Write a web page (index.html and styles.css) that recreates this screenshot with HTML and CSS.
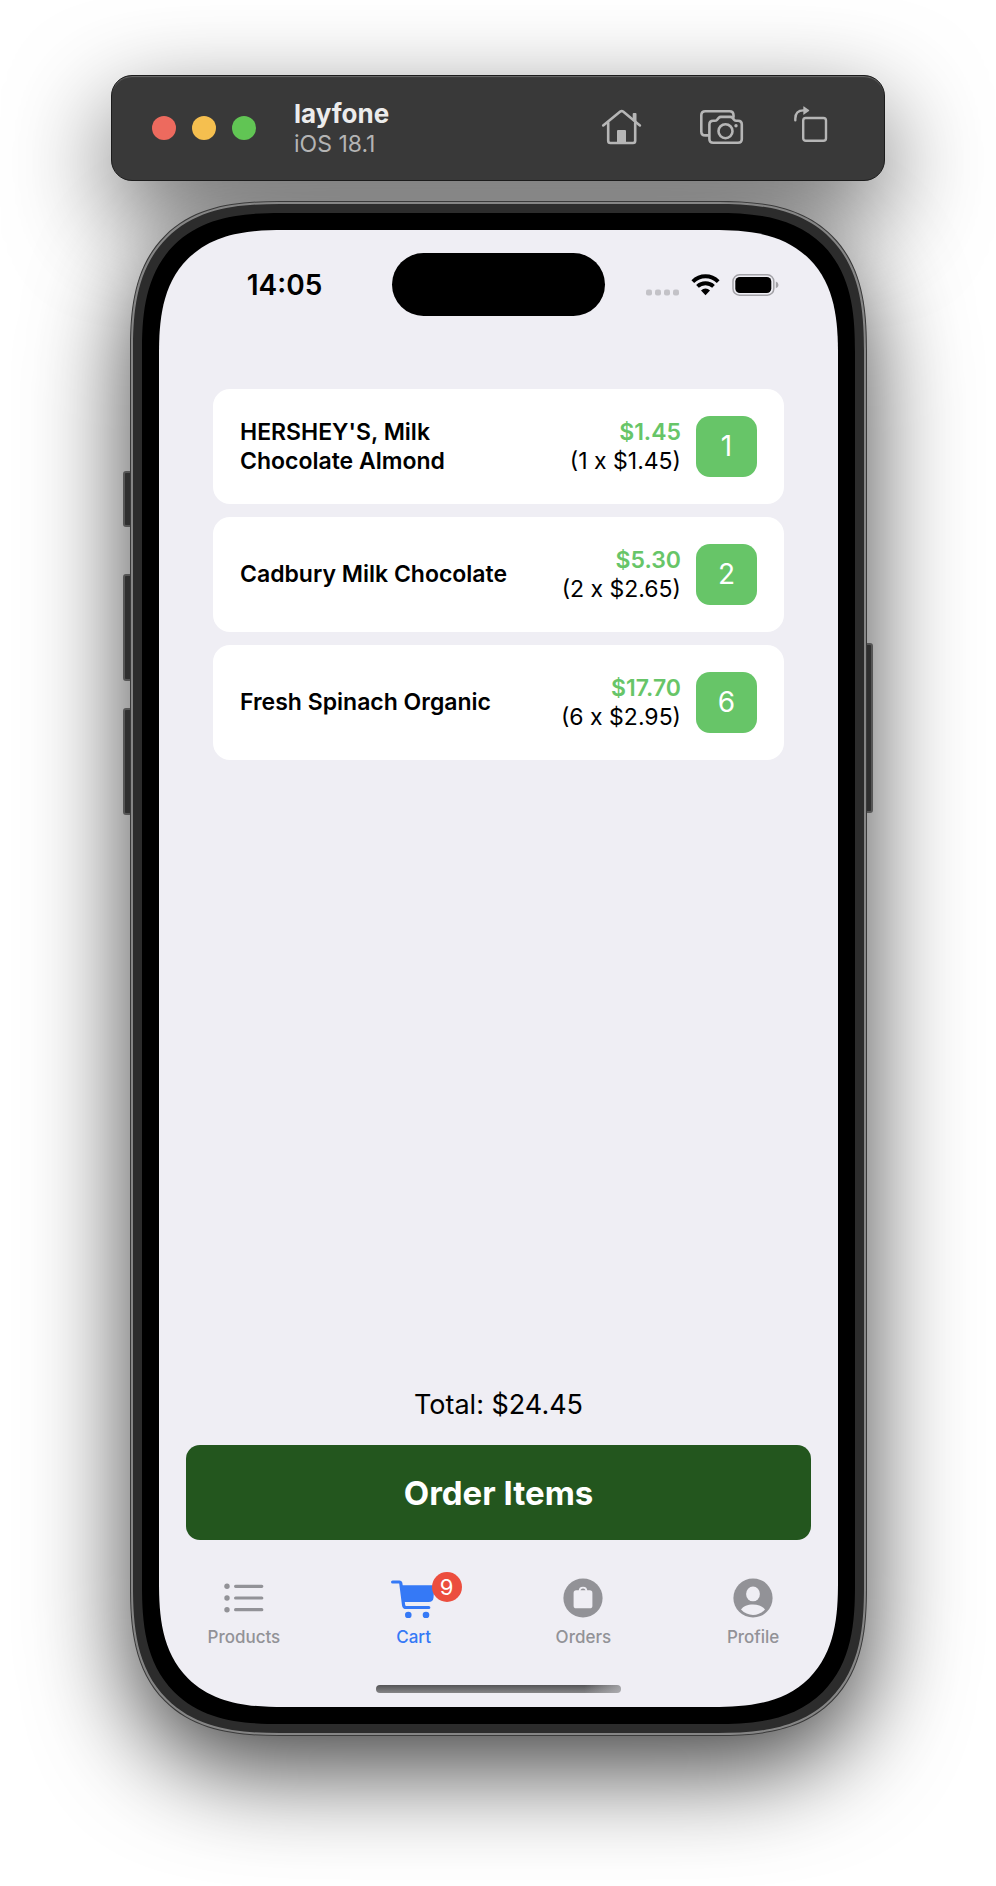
FILE: index.html
```html
<!DOCTYPE html>
<html lang="en">
<head>
<meta charset="utf-8">
<meta name="viewport" content="width=device-width, initial-scale=1">
<title>layfone – Cart</title>
<link rel="stylesheet" href="styles.css">
</head>
<body>
<div class="simulator">
  <header class="toolbar">
    <div class="lights">
      <button class="light light-close" aria-label="Close"></button>
      <button class="light light-minimize" aria-label="Minimize"></button>
      <button class="light light-zoom" aria-label="Zoom"></button>
    </div>
    <div class="device">
      <h1 class="device-name">layfone</h1>
      <p class="device-os">iOS 18.1</p>
    </div>
    <div class="tools">
      <button class="tool" aria-label="Home">
        <svg width="46" height="44" viewBox="0 0 46 44" fill="none" stroke="currentColor" stroke-width="2.6" stroke-linecap="round" stroke-linejoin="round">
          <path d="M3.2 19.4 20.3 5.6q1.4-1.1 2.8 0L39.9 19.4"/>
          <path d="M8.2 17v17.800q0 2.200 2.200 2.200h22.600q2.200 0 2.200-2.200V17"/>
          <path d="M17 37V25q0-1 1-1h7q1 0 1 1v12z" fill="currentColor" stroke="none"/>
          <path d="M32.700 13V8q0-1 1-1h1.800q1 0 1 1v9z" fill="currentColor" stroke="none"/>
        </svg>
      </button>
      <button class="tool" aria-label="Save screen">
        <svg width="48" height="44" viewBox="0 0 48 44" fill="none" stroke="currentColor" stroke-width="2.600" stroke-linecap="round" stroke-linejoin="round">
          <path d="M12 29.400H9.300q-4 0-4-4V9.200q0-4 4-4H33.500q4 0 4 4V11"/>
          <path d="M17.200 14.800h1.600q1.300 0 2.200-1l1.700-1.900q.9-1 2.200-1h9.400q1.300 0 2.200 1l1.700 1.900q.9 1 2.200 1h1.600q3.800 0 3.800 3.800V33q0 3.800-3.800 3.800H17.200q-3.800 0-3.800-3.800V18.600q0-3.800 3.800-3.800z"/>
          <circle cx="29.500" cy="25.200" r="7"/>
          <circle cx="40" cy="19.700" r="1.700" fill="currentColor" stroke="none"/>
        </svg>
      </button>
      <button class="tool" aria-label="Rotate">
        <svg width="34" height="44" viewBox="0 0 34 44" fill="none" stroke="currentColor" stroke-width="2.400" stroke-linecap="round">
          <rect x="9.200" y="12" width="22.800" height="22.800" rx="2.600"/>
          <path d="M1.300 14.300v-1.500Q1.300 4.400 9.500 4.400"/>
          <path d="M9.300.8v7.400q0 .8.700.4l5-3.700q.5-.4 0-.8L10 .4Q9.300 0 9.300.8z" fill="currentColor" stroke="none"/>
        </svg>
      </button>
    </div>
  </header>

  <div class="phone">
    <div class="side side-action"></div>
    <div class="side side-up"></div>
    <div class="side side-down"></div>
    <div class="side side-power"></div>
    <div class="frame"><div class="band"><div class="bezel">
    <div class="screen">
      <div class="status">
        <time class="clock">14:05</time>
        <div class="island"></div>
        <div class="signals">
          <svg width="33" height="22" viewBox="0 0 33 22" fill="#c3c2c7">
            <rect x="0" y="15.400" width="6" height="6" rx="2"/><rect x="9" y="15.400" width="6" height="6" rx="2"/><rect x="18" y="15.400" width="6" height="6" rx="2"/><rect x="27" y="15.400" width="6" height="6" rx="2"/>
          </svg>
          <svg width="29" height="22" viewBox="0 0 29 22" fill="none" stroke="#000" stroke-width="3.900">
            <path d="M1.800 7.600Q7.200 2.300 14.500 2.300T27.200 7.600"/>
            <path d="M6.500 12.300Q9.800 9.200 14.500 9.200T22.500 12.300"/>
            <path d="M14.500 21.200 10 16.600Q12 14.600 14.500 14.600T19 16.600z" fill="#000" stroke="none"/>
          </svg>
          <svg width="47" height="22" viewBox="0 0 47 22">
            <rect x="1" y=".8" width="40.800" height="20.400" rx="6.500" fill="none" stroke="#a3a2a7" stroke-width="1.500"/>
            <rect x="3.300" y="3" width="36" height="16" rx="4.500"/>
            <path d="M43.800 7.600q2.700.8 2.700 3.300t-2.700 3.300z" fill="#a3a2a7"/>
          </svg>
        </div>
      </div>

      <main class="cart">
        <ul class="items">
          <li class="item">
            <h2 class="item-name">HERSHEY'S, Milk Chocolate Almond</h2>
            <div class="item-cost"><strong class="item-sum">$1.45</strong><span>(1 x $1.45)</span></div>
            <button class="quantity">1</button>
          </li>
          <li class="item">
            <h2 class="item-name">Cadbury Milk Chocolate</h2>
            <div class="item-cost"><strong class="item-sum">$5.30</strong><span>(2 x $2.65)</span></div>
            <button class="quantity">2</button>
          </li>
          <li class="item">
            <h2 class="item-name">Fresh Spinach Organic</h2>
            <div class="item-cost"><strong class="item-sum">$17.70</strong><span>(6 x $2.95)</span></div>
            <button class="quantity">6</button>
          </li>
        </ul>
        <div class="checkout">
          <p class="total">Total: $24.45</p>
          <button class="order">Order Items</button>
        </div>
      </main>

      <nav class="tabs">
        <a class="tab" href="#products">
          <svg width="40" height="40" viewBox="0 0 40 40" fill="currentColor">
            <circle cx="3" cy="8.300" r="2.700"/><circle cx="3" cy="20" r="2.700"/><circle cx="3" cy="31.700" r="2.700"/>
            <path d="M11.600 8.300h26.200M11.600 20h26.200M11.600 31.700h26.200" stroke="currentColor" stroke-width="3.200" stroke-linecap="round"/>
          </svg>
          <span>Products</span>
        </a>
        <a class="tab tab-current" href="#cart" aria-current="page">
          <span class="tab-icon">
            <svg width="48" height="40" viewBox="0 0 48 40" fill="currentColor">
              <path d="M2.600 4H9.300Q10.600 4 10.800 5.300L13.600 27.200Q13.900 29.500 16.200 29.500H38.800" fill="none" stroke="currentColor" stroke-width="3.200" stroke-linecap="round" stroke-linejoin="round"/>
              <path d="M11.500 7.300H42.500Q44.500 7.300 44.300 9.300L43.500 19.700Q43 24.100 38.600 24.100H13.700z"/>
              <circle cx="18.300" cy="37" r="3.300"/><circle cx="36" cy="37" r="3.300"/>
            </svg>
            <span class="badge">9</span>
          </span>
          <span>Cart</span>
        </a>
        <a class="tab" href="#orders">
          <svg width="40" height="40" viewBox="0 0 40 40">
            <circle cx="20" cy="20" r="19.600" fill="currentColor"/>
            <rect x="10.600" y="12.300" width="18.800" height="18" rx="2.600" fill="#efeef4"/>
            <path d="M16.600 13Q16.600 9.600 20 9.600T23.400 13" fill="none" stroke="#efeef4" stroke-width="1.800"/>
          </svg>
          <span>Orders</span>
        </a>
        <a class="tab" href="#profile">
          <svg width="40" height="40" viewBox="0 0 40 40">
            <circle cx="20" cy="20" r="19.600" fill="currentColor"/>
            <ellipse cx="20" cy="15.900" rx="6.900" ry="7.400" fill="#efeef4"/>
            <path d="M8 31.600C10.200 28.200 14.600 26.500 20 26.500S29.800 28.200 32 31.600C28.500 35.300 24.500 37 20 37S11.500 35.300 8 31.600z" fill="#efeef4"/>
          </svg>
          <span>Profile</span>
        </a>
      </nav>
      <div class="home-indicator"></div>
    </div>
    </div></div></div>
  </div>
</div>
</body>
</html>
```

FILE: styles.css
```css
* {
  box-sizing: border-box;
  margin: 0;
  padding: 0;
}

body {
  background: #fff;
  color: #000;
  font-family: Inter, "Liberation Sans", sans-serif;
  overflow-x: hidden;
}

button {
  border: 0;
  background: none;
  color: inherit;
  font: inherit;
}

svg {
  display: block;
  flex: none;
}

.simulator {
  display: flex;
  flex-direction: column;
  gap: 20px;
  width: 100%;
  max-width: 774px;
  margin: 0 auto;
  padding: 75px 0 150px;
  isolation: isolate;
}

/* Window shadows lie under both windows */

.toolbar::before,
.frame::before {
  position: absolute;
  z-index: -1;
  inset: 0;
  border-radius: inherit;
  content: "";
}

.toolbar::before {
  box-shadow: 0 34px 100px rgba(0, 0, 0, 0.62);
}

.frame::before {
  corner-shape: inherit;
  box-shadow: 0 34px 100px rgba(0, 0, 0, 0.75);
}

/* Simulator window bar */

.toolbar {
  position: relative;
  display: flex;
  align-items: center;
  gap: 38px;
  padding: 22px 56px 22px 40px;
  border: 1px solid #1c1c1c;
  border-radius: 21px;
  background: #393939;
  box-shadow: inset 0 2px 1px -1px #6c6c6c;
}

.lights {
  display: flex;
  gap: 16px;
}

.light {
  width: 24px;
  height: 24px;
  border-radius: 50%;
}

.light-close {
  background: #ed6a5e;
}

.light-minimize {
  background: #f5bf4f;
}

.light-zoom {
  background: #61c554;
}

.device {
  flex: 1;
}

.device-name {
  color: #ececec;
  font-size: 26px;
  font-weight: 700;
  line-height: 32px;
}

.device-os {
  color: #b4b4b4;
  font-size: 23px;
  line-height: 28px;
}

.tools {
  display: flex;
  gap: 50px;
  color: #b6b6b6;
}

/* Phone body */

.phone {
  position: relative;
  display: flex;
  aspect-ratio: 737 / 1535;
  margin: 0 18px 0 19px;
}

.frame,
.band,
.bezel,
.screen {
  display: flex;
  flex: 1;
  corner-shape: superellipse(1.4);
}

.frame {
  position: relative;
  padding: 2px;
  border: 1px solid #3a3a3a;
  border-radius: 150px;
  background: #858585;
}

.band {
  padding: 9px;
  border-radius: 147px;
  background: #2c2c2c;
}

.bezel {
  padding: 17px;
  border-radius: 139px;
  background: #000;
}

.screen {
  flex-direction: column;
  border-radius: 125px;
  background: #efeef4;
}

.side {
  position: absolute;
  left: -7px;
  width: 10px;
  border: 2px solid #555;
  border-radius: 3px;
  background: #2f2f2f;
}

.side-action {
  top: 17.600%;
  height: 3.650%;
}

.side-up {
  top: 24.300%;
  height: 7%;
}

.side-down {
  top: 33%;
  height: 7%;
}

.side-power {
  right: -6px;
  left: auto;
  top: 28.800%;
  height: 11.100%;
}

/* Status bar */

.status {
  display: grid;
  grid-template-columns: 1fr 213px 1fr;
  align-items: center;
  padding-top: 23px;
}

.clock {
  padding-left: 18px;
  font-size: 28px;
  font-weight: 600;
  text-align: center;
}

.island {
  height: 63px;
  border-radius: 32px;
  background: #000;
}

.signals {
  display: flex;
  justify-content: center;
  gap: 12px;
  padding-right: 18px;
}

/* Cart */

.cart {
  display: flex;
  flex: 1;
  flex-direction: column;
  justify-content: space-between;
  padding: 73px 27px 0;
}

.items {
  display: flex;
  flex-direction: column;
  gap: 13px;
  padding: 0 27px;
  list-style: none;
}

.item {
  display: flex;
  align-items: center;
  gap: 15px;
  padding: 27px;
  border-radius: 17px;
  background: #fff;
  font-size: 23px;
  line-height: 29px;
}

.item-name {
  max-width: 275px;
  font-size: 23px;
  font-weight: 600;
}

.item-cost {
  display: flex;
  flex-direction: column;
  align-items: flex-end;
  margin-left: auto;
  white-space: nowrap;
}

.item-sum {
  color: #67c568;
  font-weight: 600;
}

.quantity {
  width: 61px;
  height: 61px;
  border-radius: 14px;
  background: #67c568;
  color: #fff;
  font-size: 28px;
}

.checkout {
  display: flex;
  flex-direction: column;
  gap: 23px;
}

.total {
  font-size: 27px;
  line-height: 34px;
  text-align: center;
}

.order {
  height: 95px;
  border-radius: 14px;
  background: #23561e;
  color: #fff;
  font-size: 33px;
  font-weight: 700;
}

/* Tab bar */

.tabs {
  display: grid;
  grid-template-columns: repeat(4, 1fr);
  padding: 38px 0;
}

.tab {
  display: flex;
  flex-direction: column;
  align-items: center;
  gap: 9px;
  color: #929297;
  font-size: 17px;
  font-weight: 500;
  line-height: 20px;
  text-decoration: none;
}

.tab-current {
  color: #3579f6;
}

.tab-icon {
  position: relative;
}

.badge {
  position: absolute;
  top: -6px;
  right: -24px;
  width: 30px;
  height: 30px;
  border-radius: 50%;
  background: #ec4e3e;
  color: #fff;
  font-size: 22px;
  font-weight: 400;
  line-height: 30px;
  text-align: center;
}

.home-indicator {
  width: 36%;
  height: 8px;
  margin: 0 auto 14px;
  border-radius: 4px;
  background:
    linear-gradient(to right, rgba(190, 190, 194, 0) 85%, rgba(190, 190, 194, 0.7)),
    linear-gradient(#545456, #858587);
}
```
